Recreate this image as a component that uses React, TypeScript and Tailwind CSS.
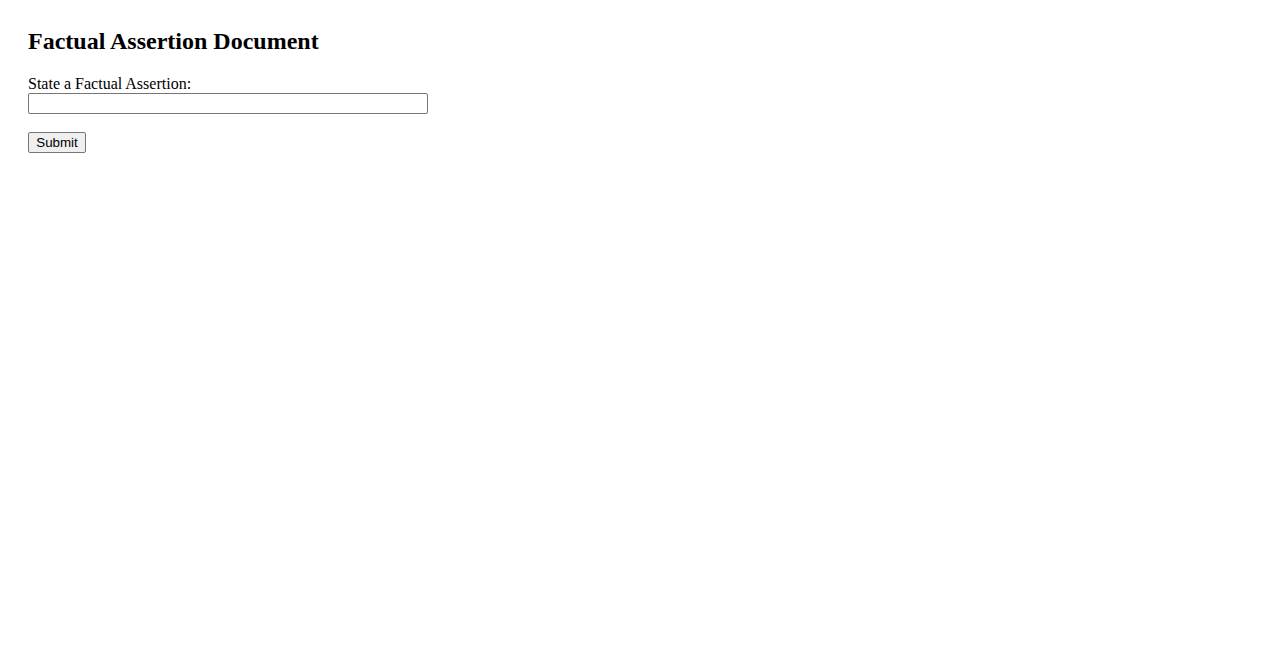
export default function App() {
  return (
    <div className="min-h-screen bg-white px-[28px] pt-[27px] pb-[28px] text-black" style={{ fontFamily: '"Liberation Serif", "Times New Roman", serif' }}>
      <h2 className="text-[24px] font-bold leading-[28px]">Factual Assertion Document</h2>
      <form className="mt-[20px]" onSubmit={(e) => e.preventDefault()}>
        <label htmlFor="assertion" className="block text-[16px] leading-[18px]">
          State a Factual Assertion:
        </label>
        <input
          id="assertion"
          type="text"
          className="block h-[21px] w-[400px] rounded-[2px] border border-[#767676] px-[2px] text-[13px] outline-none"
        />
        <button
          type="submit"
          className="mt-[18px] block h-[21px] w-[58px] rounded-[2px] border border-[#767676] bg-[#efefef] text-[13.33px] leading-[15px] hover:bg-[#e5e5e5]"
          style={{ fontFamily: '"Liberation Sans", Arial, sans-serif' }}
        >
          Submit
        </button>
      </form>
    </div>
  );
}
